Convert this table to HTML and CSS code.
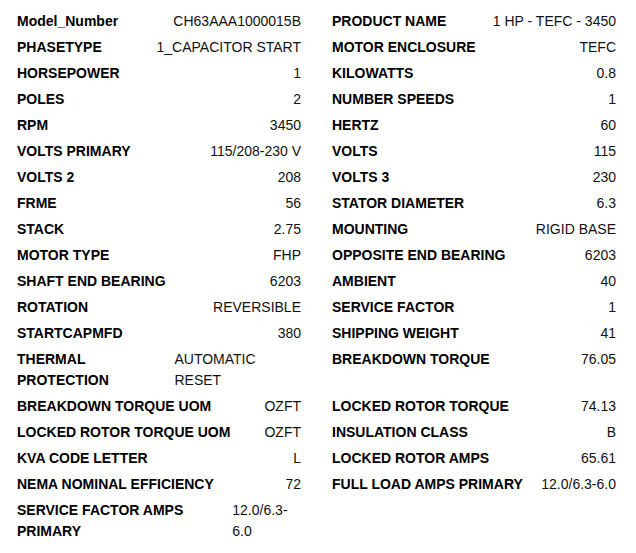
FILE: index.html
```html
<!DOCTYPE html>
<html lang="en">
<head>
    <meta charset="UTF-8">
    <title>Motor Specifications</title>
    <link rel="stylesheet" href="styles.css">
</head>
<body>
    <div class="specs">
        <div class="spec"><span class="label">Model_Number</span><span class="value">CH63AAA1000015B</span></div>
        <div class="spec"><span class="label">PRODUCT NAME</span><span class="value">1 HP - TEFC - 3450</span></div>

        <div class="spec"><span class="label">PHASETYPE</span><span class="value">1_CAPACITOR START</span></div>
        <div class="spec"><span class="label">MOTOR ENCLOSURE</span><span class="value">TEFC</span></div>

        <div class="spec"><span class="label">HORSEPOWER</span><span class="value">1</span></div>
        <div class="spec"><span class="label">KILOWATTS</span><span class="value">0.8</span></div>

        <div class="spec"><span class="label">POLES</span><span class="value">2</span></div>
        <div class="spec"><span class="label">NUMBER SPEEDS</span><span class="value">1</span></div>

        <div class="spec"><span class="label">RPM</span><span class="value">3450</span></div>
        <div class="spec"><span class="label">HERTZ</span><span class="value">60</span></div>

        <div class="spec"><span class="label">VOLTS PRIMARY</span><span class="value">115/208-230 V</span></div>
        <div class="spec"><span class="label">VOLTS</span><span class="value">115</span></div>

        <div class="spec"><span class="label">VOLTS 2</span><span class="value">208</span></div>
        <div class="spec"><span class="label">VOLTS 3</span><span class="value">230</span></div>

        <div class="spec"><span class="label">FRME</span><span class="value">56</span></div>
        <div class="spec"><span class="label">STATOR DIAMETER</span><span class="value">6.3</span></div>

        <div class="spec"><span class="label">STACK</span><span class="value">2.75</span></div>
        <div class="spec"><span class="label">MOUNTING</span><span class="value">RIGID BASE</span></div>

        <div class="spec"><span class="label">MOTOR TYPE</span><span class="value">FHP</span></div>
        <div class="spec"><span class="label">OPPOSITE END BEARING</span><span class="value">6203</span></div>

        <div class="spec"><span class="label">SHAFT END BEARING</span><span class="value">6203</span></div>
        <div class="spec"><span class="label">AMBIENT</span><span class="value">40</span></div>

        <div class="spec"><span class="label">ROTATION</span><span class="value">REVERSIBLE</span></div>
        <div class="spec"><span class="label">SERVICE FACTOR</span><span class="value">1</span></div>

        <div class="spec"><span class="label">STARTCAPMFD</span><span class="value">380</span></div>
        <div class="spec"><span class="label">SHIPPING WEIGHT</span><span class="value">41</span></div>

        <div class="spec"><span class="label">THERMAL PROTECTION</span><span class="value">AUTOMATIC RESET</span></div>
        <div class="spec"><span class="label">BREAKDOWN TORQUE</span><span class="value">76.05</span></div>

        <div class="spec"><span class="label">BREAKDOWN TORQUE UOM</span><span class="value">OZFT</span></div>
        <div class="spec"><span class="label">LOCKED ROTOR TORQUE</span><span class="value">74.13</span></div>

        <div class="spec"><span class="label">LOCKED ROTOR TORQUE UOM</span><span class="value">OZFT</span></div>
        <div class="spec"><span class="label">INSULATION CLASS</span><span class="value">B</span></div>

        <div class="spec"><span class="label">KVA CODE LETTER</span><span class="value">L</span></div>
        <div class="spec"><span class="label">LOCKED ROTOR AMPS</span><span class="value">65.61</span></div>

        <div class="spec"><span class="label">NEMA NOMINAL EFFICIENCY</span><span class="value">72</span></div>
        <div class="spec"><span class="label">FULL LOAD AMPS PRIMARY</span><span class="value">12.0/6.3-6.0</span></div>

        <div class="spec"><span class="label">SERVICE FACTOR AMPS PRIMARY</span><span class="value">12.0/6.3-6.0</span></div>
    </div>
</body>
</html>
```

FILE: styles.css
```css
body {
    margin: 0;
    background-color: #fff;
    color: #000;
    font-family: "Liberation Sans", Arial, sans-serif;
    font-size: 14px;
    line-height: 21px;
}
.specs {
    display: grid;
    grid-template-columns: 284px 284px;
    column-gap: 31px;
    row-gap: 5px;
    align-items: start;
    padding: 11px 0 0 17px;
}
.spec {
    display: flex;
    justify-content: space-between;
}
.label {
    font-weight: bold;
}
.value {
    color: #111;
}
```
